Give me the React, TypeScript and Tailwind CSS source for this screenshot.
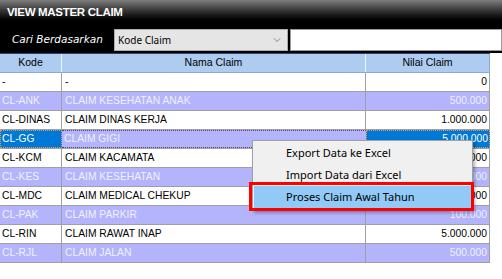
import { ChevronDown } from "lucide-react";

type Row = { kode: string; nama: string; nilai: string };

const ROWS: Row[] = [
  { kode: "-", nama: "-", nilai: "0" },
  { kode: "CL-ANK", nama: "CLAIM KESEHATAN ANAK", nilai: "500.000" },
  { kode: "CL-DINAS", nama: "CLAIM DINAS KERJA", nilai: "1.000.000" },
  { kode: "CL-GG", nama: "CLAIM GIGI", nilai: "5.000.000" },
  { kode: "CL-KCM", nama: "CLAIM KACAMATA", nilai: "1.000.000" },
  { kode: "CL-KES", nama: "CLAIM KESEHATAN", nilai: "500.000" },
  { kode: "CL-MDC", nama: "CLAIM MEDICAL CHEKUP", nilai: "1.000.000" },
  { kode: "CL-PAK", nama: "CLAIM PARKIR", nilai: "100.000" },
  { kode: "CL-RIN", nama: "CLAIM RAWAT INAP", nilai: "5.000.000" },
  { kode: "CL-RJL", nama: "CLAIM JALAN", nilai: "500.000" },
];

const SELECTED = 3;

function GridRow({ row, index }: { row: Row; index: number }) {
  const alt = index % 2 === 1;
  const selected = index === SELECTED;
  const base = alt ? "bg-[#b4b4fc] text-[#f0f0ff]" : "bg-white text-black";

  if (selected) {
    return (
      <div className="flex h-[19px] w-[490px] border-b border-[#a0a0a0]">
        <div className="flex w-[62px] items-center border border-dotted border-[#e39a52] bg-[#0078d7] pl-[1px] text-white">
          {row.kode}
        </div>
        <div className="flex w-[304px] items-center border-y border-dotted border-[#4a4a6a] bg-[#b4b4fc] pl-[2px] text-[#f0f0ff]">
          {row.nama}
        </div>
        <div className="flex w-[124px] items-center justify-end border border-dotted border-[#e39a52] bg-[#0078d7] pr-[1px] text-white">
          {row.nilai}
        </div>
      </div>
    );
  }

  return (
    <div className={`flex h-[19px] w-[490px] border-b border-[#a0a0a0] ${base}`}>
      <div className="flex w-[62px] items-center border-r border-[#a0a0a0] pl-[2px]">{row.kode}</div>
      <div className="flex w-[304px] items-center border-r border-[#a0a0a0] pl-[3px]">{row.nama}</div>
      <div className="flex w-[124px] items-center justify-end border-r border-[#a0a0a0] pr-[2px]">{row.nilai}</div>
    </div>
  );
}

export default function App() {
  return (
    <div className="relative h-[279px] w-[502px] overflow-hidden bg-white font-['Liberation_Sans',sans-serif]">
      {/* title */}
      <div className="h-[24px] bg-gradient-to-b from-[#7e7e7e] to-black px-[7px] text-[11.5px] font-bold leading-[24px] tracking-[-0.3px] text-white">
        VIEW MASTER CLAIM
      </div>

      {/* search */}
      <div className="flex h-[29px] items-start bg-black pt-[5px]">
        <span className="ml-[12px] mt-[3px] w-[102px] font-['DejaVu_Sans',sans-serif] text-[10.5px] italic text-white">
          Cari Berdasarkan
        </span>
        <div className="flex h-[22px] w-[174px] items-center justify-between border border-[#adadad] bg-[#e5e5e5] pl-[3px] pr-[4px] font-['Noto_Sans',sans-serif] text-[10px] text-black">
          <span>Kode Claim</span>
          <ChevronDown className="h-[12px] w-[12px] text-[#555]" strokeWidth={1.3} />
        </div>
        <div className="ml-[2px] h-[22px] flex-1 border border-[#9a9a9a] bg-white" />
      </div>

      {/* grid */}
      <div className="text-[10.3px]">
        <div className="flex h-[20px] w-[490px] border-y border-t-[#27457a] border-b-[#8aa9d4] bg-[#aecbf0] text-[10.5px] text-black">
          <div className="flex w-[62px] items-center justify-center border-r border-[#eef4fc]">Kode</div>
          <div className="flex w-[304px] items-center justify-center border-r border-[#eef4fc]">Nama Claim</div>
          <div className="flex w-[124px] items-center justify-center border-r border-[#8aa9d4]">Nilai Claim</div>
        </div>
        {ROWS.map((row, i) => (
          <GridRow key={row.kode + i} row={row} index={i} />
        ))}
      </div>

      {/* context menu */}
      <div className="absolute left-[252px] top-[140px] w-[221px] border border-[#a0a0a0] bg-[#f0f0f0] py-[2px] font-['Noto_Sans',sans-serif] text-[11px] text-black shadow-[2px_2px_3px_rgba(0,0,0,0.3)]">
        <div className="flex h-[21px] items-center pl-[33px]">Export Data ke Excel</div>
        <div className="flex h-[22px] items-center pl-[33px]">Import Data dari Excel</div>
        <div className="mx-[1px] flex h-[22px] items-center bg-[#91c9f7] pl-[32px]">Proses Claim Awal Tahun</div>
      </div>
      <div className="absolute left-[249px] top-[182px] h-[29px] w-[225px] border-[3px] border-[#f00]" />
    </div>
  );
}
